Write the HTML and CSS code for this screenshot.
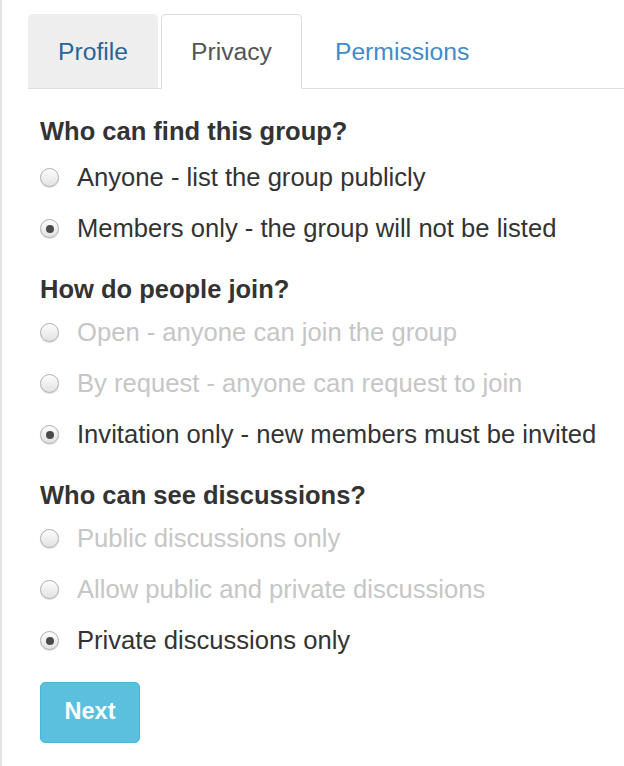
FILE: index.html
```html
<!DOCTYPE html>
<html>
<head>
<meta charset="utf-8">
<link rel="stylesheet" href="styles.css">
</head>
<body>
<div class="panel">
  <ul class="nav-tabs">
    <li class="tab tab-hover">Profile</li>
    <li class="tab tab-active">Privacy</li>
    <li class="tab">Permissions</li>
  </ul>
  <div class="content">
    <h3 class="group-title first">Who can find this group?</h3>
    <label class="radio"><span class="dot"></span>Anyone - list the group publicly</label>
    <label class="radio"><span class="dot checked"></span>Members only - the group will not be listed</label>

    <h3 class="group-title">How do people join?</h3>
    <label class="radio disabled"><span class="dot"></span>Open - anyone can join the group</label>
    <label class="radio disabled"><span class="dot"></span>By request - anyone can request to join</label>
    <label class="radio"><span class="dot checked"></span>Invitation only - new members must be invited</label>

    <h3 class="group-title">Who can see discussions?</h3>
    <label class="radio disabled"><span class="dot"></span>Public discussions only</label>
    <label class="radio disabled"><span class="dot"></span>Allow public and private discussions</label>
    <label class="radio"><span class="dot checked"></span>Private discussions only</label>

    <button class="btn-next">Next</button>
  </div>
</div>
</body>
</html>
```

FILE: styles.css
```css
html, body {
  margin: 0;
  padding: 0;
  background: #fff;
}

body {
  font-family: "Liberation Sans", Arial, Helvetica, sans-serif;
  color: #333;
}

.panel {
  box-sizing: border-box;
  min-height: 766px;
  border-left: 2px solid #e2e2e2;
  padding: 14px 0 0 26px;
}

.nav-tabs {
  display: flex;
  list-style: none;
  margin: 0;
  padding: 0;
  border-bottom: 1px solid #ddd;
}

.tab {
  box-sizing: border-box;
  height: 75px;
  display: flex;
  align-items: center;
  padding: 0 29px;
  margin: 0 3px -1px 0;
  border: 1px solid transparent;
  border-radius: 5px 5px 0 0;
  font-size: 24.7px;
  color: #428bca;
}

.tab-hover {
  background: #eee;
  border-color: #eee #eee #ddd;
  color: #2a6496;
}

.tab-active {
  background: #fff;
  border-color: #ddd #ddd transparent;
  color: #555;
}

.content {
  padding-left: 12px;
  display: flex;
  flex-direction: column;
  align-items: flex-start;
}

.group-title {
  margin: 20px 0 3px;
  font-size: 25.5px;
  line-height: 30px;
  font-weight: bold;
  color: #333;
}

.group-title.first {
  margin-top: 27px;
  margin-bottom: 6px;
}

.radio {
  display: flex;
  align-items: center;
  height: 51px;
  font-size: 25.6px;
  color: #333;
}

.radio.disabled {
  color: #c6c6c6;
}

.dot {
  box-sizing: border-box;
  width: 19px;
  height: 19px;
  margin-right: 18px;
  border-radius: 50%;
  border: 1px solid #b0b0b0;
  background: linear-gradient(#fdfdfd, #e2e2e2);
  box-shadow: 0 1px 1px rgba(0, 0, 0, 0.15);
  display: flex;
  align-items: center;
  justify-content: center;
}

.dot.checked::after {
  content: "";
  width: 8px;
  height: 8px;
  border-radius: 50%;
  background: #4a4a4a;
}

.btn-next {
  margin-top: 16px;
  box-sizing: border-box;
  width: 100px;
  height: 61px;
  background: #5bc0de;
  border: 1px solid #46b8da;
  border-radius: 5px;
  color: #fff;
  font-family: "Liberation Sans", Arial, Helvetica, sans-serif;
  font-size: 23.5px;
  font-weight: bold;
  padding: 0 0 2px;
}
```
